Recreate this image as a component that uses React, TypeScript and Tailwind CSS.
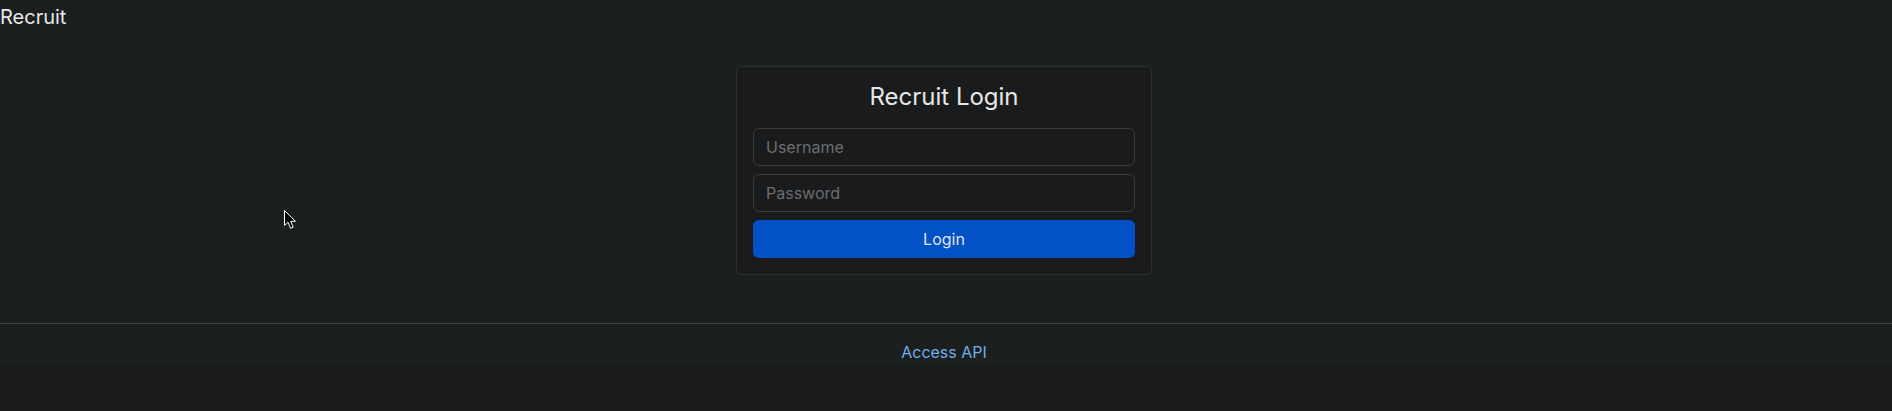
import React from "react";

function Pointer() {
  return (
    <svg
      className="absolute left-[284px] top-[210px] pointer-events-none"
      width="14"
      height="20"
      viewBox="0 0 14 20"
    >
      <path
        d="M0.5 0.5 L0.5 15.5 L4 12.2 L6.6 18.3 L9.2 17.2 L6.7 11.3 L11.5 11.3 Z"
        fill="#000"
        stroke="#fff"
        strokeWidth="1"
        strokeLinejoin="miter"
      />
    </svg>
  );
}

export default function App() {
  return (
    <div
      className="relative min-h-[411px] bg-[#1a1b1c] text-[#e4e5e6]"
      style={{ fontFamily: "Inter, 'Noto Sans', sans-serif" }}
    >
      <div className="bg-[#1c1f20]">
        <header className="pt-[2px] text-xl leading-[30px] text-[#e6e7e8]">Recruit</header>

        <main className="flex justify-center pr-1 pt-[34px] pb-12">
          <div className="w-[416px] rounded-md border border-[#2e3133] bg-[#1a1b1c] p-4">
            <h1 className="mb-4 text-center text-2xl leading-[1.2] text-[#e6e7e8]">Recruit Login</h1>
            <form className="flex flex-col gap-2" onSubmit={(e) => e.preventDefault()}>
              <input
                type="text"
                placeholder="Username"
                className="h-[38px] w-full rounded-md border border-[#3a3d40] bg-[#1a1b1c] px-3 text-base text-[#e4e5e6] placeholder:text-[#6b6e71] outline-none"
              />
              <input
                type="password"
                placeholder="Password"
                className="h-[38px] w-full rounded-md border border-[#3a3d40] bg-[#1a1b1c] px-3 text-base text-[#e4e5e6] placeholder:text-[#6b6e71] outline-none"
              />
              <button
                type="submit"
                className="h-[38px] w-full rounded-md bg-[#0251c7] text-base text-[#dfe6f1]"
              >
                Login
              </button>
            </form>
          </div>
        </main>

        <footer className="border-t border-[#3e4144] pr-1 pt-4 text-center text-base leading-6">
          <a href="#" className="text-[#72aee8]">
            Access API
          </a>
        </footer>
      </div>
      <Pointer />
    </div>
  );
}
